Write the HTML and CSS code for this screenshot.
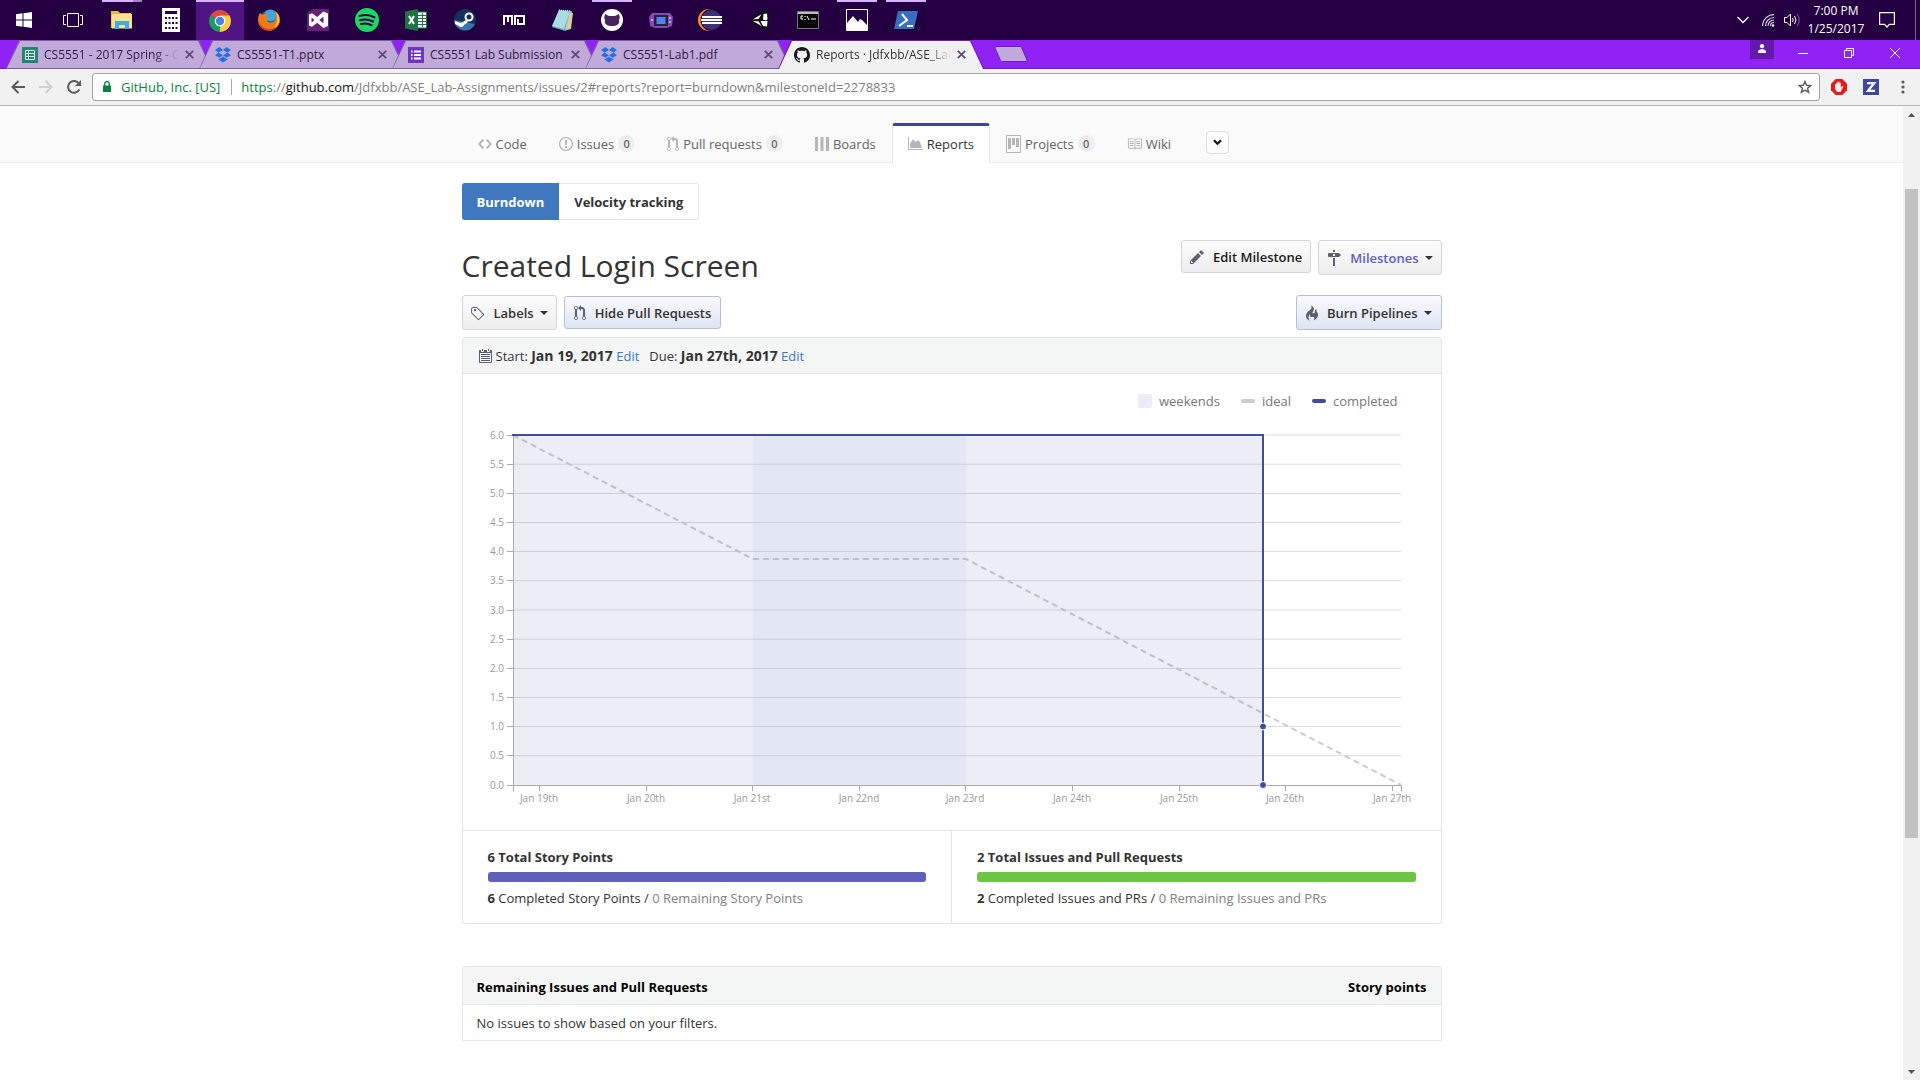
FILE: index.html
```html
<!DOCTYPE html>
<html lang="en">
<head>
<meta charset="utf-8">
<title>Reports · Jdfxbb/ASE_Lab-Assignments</title>
<link rel="stylesheet" href="styles.css">
</head>
<body>
<header class="taskbar">
  <div class="apps">
    <button class="app" aria-label="Start"><svg width="16" height="16" viewBox="0 0 16 16" fill="#fff"><path d="M0 2.300 6.500 1.300V7.500H0zM7.500 1.200 16 0V7.500H7.500zM0 8.500H6.500V14.700L0 13.700zM7.500 8.500H16V16L7.500 14.800z"/></svg></button>
    <button class="app" aria-label="Task view"><svg width="20" height="14" viewBox="0 0 20 14" fill="none" stroke="#fff"><path d="M4.500 .5h11v13h-11zM3 2.500H.5v9H3M17 2.500h2.500v9H17"/></svg></button>
    <button class="app open stacked" aria-label="File Explorer"><svg width="22" height="18" viewBox="0 0 22 18"><path d="M0 0h7l2 2h11v4H0z" fill="#e9b74c"/><path d="M1 3h20v14.500H1z" fill="#fde08f"/><path d="M0 5h1v12H0z" fill="#efc560"/><path d="M4 18v-8h14v8h-4v-4H8v4z" fill="#35b0e8"/></svg></button>
    <button class="app" aria-label="Calculator"><svg width="18" height="24" viewBox="0 0 18 24"><path d="M0 0h18v24H0z" fill="#fff"/><path d="M3 3h12v3H3zM3 9h2v2H3zm3.500 0h2v2h-2zm3.500 0h2v2h-2zm3.500 0h2v2h-2zM3 14h2v2H3zm3.500 0h2v2h-2zm3.500 0h2v2h-2zm3.500 0h2v2h-2zM3 19h2v2H3zm3.500 0h2v2h-2zm3.500 0h2v2h-2zm3.500 0h2v2h-2z" fill="#240046"/></svg></button>
    <button class="app active" aria-label="Chrome"><svg width="22" height="22" viewBox="0 0 22 22"><path d="M11 11 1.500 5.500A11 11 0 0 1 20.500 5.500z" fill="#dd4b3e"/><path d="M11 11 20.500 5.500A11 11 0 0 1 11 22z" fill="#fdce43"/><path d="M11 11 11 22A11 11 0 0 1 1.500 5.500z" fill="#1ba05c"/><path d="M11 5.500h9.500L15.500 14 11 22z" fill="#fdce43"/><circle cx="11" cy="11" r="5.300" fill="#fff"/><circle cx="11" cy="11" r="4.200" fill="#4486ee"/></svg></button>
    <button class="app" aria-label="Firefox"><svg width="22" height="22" viewBox="0 0 22 22"><circle cx="12" cy="10.500" r="10" fill="#1d62a8"/><circle cx="12.500" cy="6.500" r="6" fill="#3fa5dc"/><path d="M2 4 5 6C7 4 9 5 10 6L8 9C11 9 11 11 9 12 11 15 16 14 17 11 19 8 18 4 16 2 21 4 23 10 21.500 14 19 21 11 24 5 20-1 16-1 9 2 4z" fill="#ee7a1c"/><path d="M18 3c5 5 4 13-2 16 4-5 4-10 2-16z" fill="#ffcf45"/><path d="M1 12c2 8 11 10 17 6-3 5-12 5-16-1z" fill="#d8401f"/></svg></button>
    <button class="app" aria-label="Visual Studio"><svg width="22" height="22" viewBox="0 0 22 22"><path d="M0 4l6-4h16v22H0z" fill="#68217a"/><path d="M2 5.500v11l3 1.200 5.200-4L16.500 19l4.500-2V4.500L16.500 2.500 10.200 8 5 4.300z" fill="#fff"/><path d="m4.500 8.500 3 2.500-3 2.500zM16.500 7.500v7L12.300 11z" fill="#68217a"/></svg></button>
    <button class="app" aria-label="Spotify"><svg width="24" height="24" viewBox="0 0 24 24"><circle cx="12" cy="12" r="12" fill="#1ed760"/><path d="M4.500 8c5-1.500 11-1 15 1.400M5 12.200c4.500-1.300 9-.8 13 1.300M6 16c3.500-1 7.500-.6 10.500 1.100" fill="none" stroke="#240046" stroke-width="2" stroke-linecap="round"/></svg></button>
    <button class="app" aria-label="Excel"><svg width="22" height="22" viewBox="0 0 22 22"><path d="M12 3h9.500v16H12z" fill="#fff" stroke="#1f7244"/><path d="M13 6.500h8M13 9.500h8M13 12.500h8M13 15.500h8M17.500 4v14" stroke="#1f7244"/><path d="M0 2.500 13 0v22L0 19.500z" fill="#1f7244"/><path d="m4 7 5 8M9 7l-5 8" stroke="#fff" stroke-width="2"/></svg></button>
    <button class="app" aria-label="Steam"><svg width="22" height="22" viewBox="0 0 22 22"><circle cx="11" cy="11" r="11" fill="#15325c"/><path d="M0 11a11 11 0 0 0 21 4z" fill="#3975a8"/><circle cx="15" cy="8" r="3.500" fill="none" stroke="#fff" stroke-width="2"/><path d="m1 12 6 2 5-3 2 2-4 3a3 3 0 0 1-5 1l-4-2z" fill="#fff"/></svg></button>
    <button class="app" aria-label="Mo"><svg width="22" height="12" viewBox="0 0 22 12" fill="none" stroke="#fff" stroke-width="2"><path d="M1 11V2h8v9M5 2v6M12 11V2M11 2h10v8h-6V5"/></svg></button>
    <button class="app" aria-label="Notepad"><svg width="24" height="22" viewBox="0 0 24 22"><path d="m8 1 13 1-2 18-5 2-13-4z" fill="#65aaba"/><path d="m8 1 11 2-6 17-12-3z" fill="#a9dce3"/><path d="m19 3 3 1-2 16-6 1z" fill="#d8cda7"/><path d="m8 1 12 1" stroke="#fff" stroke-dasharray="1 1"/></svg></button>
    <button class="app open" aria-label="GitHub Desktop"><svg width="22" height="22" viewBox="0 0 22 22"><circle cx="11" cy="11" r="11" fill="#fff"/><path d="M4 5l4 2h6l4-2c1 3 1 4 0 6 1 4-2 6-7 6s-8-2-7-6c-1-2-1-3 0-6z" fill="#4a2461"/></svg></button>
    <button class="app" aria-label="Game emulator"><svg width="24" height="16" viewBox="0 0 24 16"><path d="M3 1h18l3 4-1 9-5 2H6l-5-2L0 5z" fill="#8848b5"/><path d="M5 3h14v11H5z" fill="#25213c"/><path d="M7.500 5h9v7h-9z" fill="#5182ed"/><path d="M2 8h2M20 6h2M20 10h2" stroke="#fff"/></svg></button>
    <button class="app" aria-label="Eclipse"><svg width="24" height="22" viewBox="0 0 24 22"><circle cx="11" cy="11" r="11" fill="#f7941e"/><circle cx="13.500" cy="11" r="11" fill="#240042"/><circle cx="13.500" cy="11" r="10" fill="#3a3277"/><path d="M4 8h20M3 11h21M4 14h20" stroke="#fff" stroke-width="1.800"/></svg></button>
    <button class="app" aria-label="Unity"><svg width="20" height="20" viewBox="0 0 20 20"><path d="M0 10 14 1l5 1 1 8-1 8-5 1z" fill="#111"/><path d="m4 9.200 8.500-5L9.500 9zM4 11l5.500.2 3 4.800zM14.500 4l3.500-.5.5 6-1.500 1-3-1zM18.500 11l-.5 5.500-4-.5-2.500-5z" fill="#fff"/></svg></button>
    <button class="app" aria-label="Command Prompt"><svg width="22" height="18" viewBox="0 0 22 18"><path d="M.5.5h21v17H.5z" fill="#080808" stroke="#777"/><path d="M1 2h20" stroke="#bbb" stroke-width="2"/><path d="M6 5H4v3h2M8 5v1M8 8v1M10 5l2 4M14 8h5" fill="none" stroke="#fff"/></svg></button>
    <button class="app open" aria-label="Photos"><svg width="22" height="22" viewBox="0 0 22 22"><path d="M.5.5h21v21H.5z" fill="#240046" stroke="#fff"/><path d="m1 14 6-7 5 6 2-3 2 1 5 5v5H1z" fill="#fff"/></svg></button>
    <button class="app open" aria-label="PowerShell"><svg width="24" height="18" viewBox="0 0 24 18"><path d="M4 0h20l-4 18H0z" fill="#386fc5"/><path d="m8 3 5 6-8 6M13 15h6" fill="none" stroke="#fff" stroke-width="2"/></svg></button>
  </div>
  <div class="tray">
    <svg width="12" height="8" viewBox="0 0 12 8" fill="none" stroke="#fff" stroke-width="1.300"><path d="m.5 1 5.500 5.500L11.500 1"/></svg>
    <svg width="13" height="13" viewBox="0 0 13 13" fill="none" stroke="#d4cbdc" stroke-width="1.200"><path d="M.6 12A11.400 11.400 0 0 1 12 .6M3.500 12A8.500 8.500 0 0 1 12 3.500M6 12a6 6 0 0 1 6-6M8.500 12A3.500 3.500 0 0 1 12 8.500"/><circle cx="11" cy="11.500" r="1.200" fill="#fff" stroke="none"/></svg>
    <svg width="17" height="14" viewBox="0 0 17 14" fill="none" stroke="#fff"><path d="M.5 4.500h2.500L6.500 1v12L3 9.500H.5zM8.500 5q1.500 2 0 4M10.500 3q3 4 0 8"/><path d="M13 1q4.500 6 0 12" opacity=".4"/></svg>
    <time class="clock"><span>7:00 PM</span><span>1/25/2017</span></time>
    <svg width="16" height="16" viewBox="0 0 16 16" fill="none" stroke="#fff" stroke-width="1.200"><path d="M.6.6h14.800v11.800h-5L8 15l-2.400-2.600h-5z"/></svg>
    <span class="desk-edge"></span>
  </div>
</header>

<div class="titlebar">
  <div class="tabs">
    <div class="tab"><svg class="fav" viewBox="0 0 16 16"><path d="M0 0h16v16H0z" fill="#23866f"/><path d="M3.500 3.500h9v9h-9zM3.500 6.500h9M3.500 9.500h9M6.500 3.500v9" fill="none" stroke="#e2e4ee"/></svg><span class="tab-text faded">CS5551 - 2017 Spring - G</span><button class="tab-close" aria-label="Close tab"><svg width="9" height="9" viewBox="0 0 9 9"><path d="m.8.8 7.400 7.400M8.200.8.800 8.200"/></svg></button></div>
    <div class="tab"><svg class="fav" viewBox="0 0 16 16" fill="#2170e8"><path d="m4.500 0 3.500 3-4.500 2.500L0 3zM11.500 0 8 3l4.500 2.500L16 3zM0 8.200l3.500-2.700L8 8.200l-3.500 2.600zM16 8.200l-3.500-2.700L8 8.200l3.500 2.600zM3.500 11.600l1 .5L8 9.500l3.500 2.600 1-.5v1L8 15.500l-4.500-2.900z"/></svg><span class="tab-text">CS5551-T1.pptx</span><button class="tab-close" aria-label="Close tab"><svg width="9" height="9" viewBox="0 0 9 9"><path d="m.8.8 7.400 7.400M8.200.8.800 8.200"/></svg></button></div>
    <div class="tab"><svg class="fav" viewBox="0 0 16 16"><path d="M0 0h16v16H0z" fill="#6e35bd"/><path d="M3 4.500h1.500M6 4.500h7M3 8h1.500M6 8h7M3 11.500h1.500M6 11.500h7" stroke="#fff" stroke-width="1.800"/></svg><span class="tab-text">CS5551 Lab Submission</span><button class="tab-close" aria-label="Close tab"><svg width="9" height="9" viewBox="0 0 9 9"><path d="m.8.8 7.400 7.400M8.200.8.800 8.200"/></svg></button></div>
    <div class="tab"><svg class="fav" viewBox="0 0 16 16" fill="#2170e8"><path d="m4.500 0 3.500 3-4.500 2.500L0 3zM11.500 0 8 3l4.500 2.500L16 3zM0 8.200l3.500-2.700L8 8.200l-3.500 2.600zM16 8.200l-3.500-2.700L8 8.200l3.500 2.600zM3.500 11.600l1 .5L8 9.500l3.500 2.600 1-.5v1L8 15.500l-4.500-2.900z"/></svg><span class="tab-text">CS5551-Lab1.pdf</span><button class="tab-close" aria-label="Close tab"><svg width="9" height="9" viewBox="0 0 9 9"><path d="m.8.8 7.400 7.400M8.200.8.800 8.200"/></svg></button></div>
    <div class="tab current"><svg class="fav" viewBox="0 0 16 16" fill="#1b1817"><path d="M8 0C3.580 0 0 3.580 0 8c0 3.540 2.290 6.530 5.470 7.590.4.070.55-.17.55-.38 0-.19-.01-.82-.01-1.490-2.010.37-2.530-.49-2.690-.94-.09-.23-.48-.94-.82-1.130-.28-.15-.68-.52-.01-.53.63-.01 1.080.58 1.230.82.72 1.210 1.870.87 2.330.66.07-.52.28-.87.51-1.070-1.780-.2-3.640-.89-3.640-3.950 0-.87.31-1.590.82-2.150-.08-.2-.36-1.020.08-2.120 0 0 .67-.21 2.200.82.640-.18 1.320-.27 2-.27s1.360.09 2 .27c1.530-1.040 2.200-.82 2.200-.82.440 1.100.16 1.920.08 2.120.51.56.82 1.270.82 2.150 0 3.070-1.870 3.750-3.650 3.950.29.25.54.73.54 1.480 0 1.070-.01 1.930-.01 2.200 0 .21.150.46.550.38A8.010 8.010 0 0 0 16 8c0-4.420-3.580-8-8-8z"/></svg><span class="tab-text faded">Reports · Jdfxbb/ASE_Lab</span><button class="tab-close" aria-label="Close tab"><svg width="9" height="9" viewBox="0 0 9 9"><path d="m.8.8 7.400 7.400M8.200.8.800 8.200"/></svg></button></div>
    <button class="new-tab" aria-label="New tab"><svg width="34" height="16" viewBox="0 0 34 16"><path d="M2 .5h24q1 0 1.500 1L33 14q.3 1.500-1 1.500H8.500q-1.500 0-2-1L1 2Q.8.500 2 .5z" fill="#c1a9d9" stroke="#6f1bc0"/></svg></button>
  </div>
  <div class="window-controls">
    <button class="user" aria-label="Profile"><svg width="8" height="9" viewBox="0 0 8 9" fill="#fff"><circle cx="4" cy="2.200" r="2.100"/><path d="M0 9V7q4-4 8 0v2z"/></svg></button>
    <button aria-label="Minimize"><svg width="10" height="10" viewBox="0 0 10 10"><path d="M0 5.500h10"/></svg></button>
    <button aria-label="Restore"><svg width="10" height="10" viewBox="0 0 10 10"><path d="M.5 2.500h7v7h-7zM2.500 2.500v-2h7v7h-2"/></svg></button>
    <button aria-label="Close"><svg width="10" height="10" viewBox="0 0 10 10"><path d="m0 0 10 10M10 0 0 10"/></svg></button>
  </div>
</div>

<div class="toolbar">
  <button aria-label="Back"><svg width="14" height="14" viewBox="0 0 14 14" fill="none" stroke="#5a5a5a" stroke-width="2"><path d="M14 7H1.500M7.500 1l-6 6 6 6"/></svg></button>
  <button aria-label="Forward"><svg width="14" height="14" viewBox="0 0 14 14" fill="none" stroke="#d0d0d0" stroke-width="2"><path d="M0 7h12.500M6.500 1l6 6-6 6"/></svg></button>
  <button aria-label="Reload"><svg width="14" height="14" viewBox="0 0 14 14" fill="none" stroke="#5a5a5a" stroke-width="2"><path d="M12.300 9.500A5.900 5.900 0 1 1 11.500 3"/><path d="M14 0v6H8z" fill="#5a5a5a" stroke="none"/></svg></button>
  <div class="omnibox">
    <svg width="8" height="11" viewBox="0 0 8 11"><path d="M0 4.500h8V11H0z" fill="#0b8043"/><path d="M1.700 5V3a2.300 2.300 0 0 1 4.600 0v2" fill="none" stroke="#0b8043" stroke-width="1.300"/></svg>
    <span class="cert">GitHub, Inc. [US]</span>
    <div class="url" role="textbox" aria-label="Address" contenteditable="true" spellcheck="false"><span class="secure">https</span>://<span class="host">github.com</span>/Jdfxbb/ASE_Lab-Assignments/issues/2#reports?report=burndown&amp;milestoneId=2278833</div>
    <button class="star" aria-label="Bookmark"><svg width="14" height="14" viewBox="0 0 14 14" fill="none" stroke="#5a5a5a" stroke-width="1.400"><path d="m7 1.500 1.600 3.800 4.100.3-3.100 2.700 1 4L7 10.100l-3.600 2.200 1-4-3.100-2.700 4.100-.3z"/></svg></button>
  </div>
  <button class="ext" aria-label="AdBlock"><svg width="16" height="16" viewBox="0 0 16 16"><path d="M4.700 0h6.600L16 4.700v6.600L11.300 16H4.700L0 11.300V4.700z" fill="#e31b1e"/><path d="M4 10V5.500q.8-1 1.300 0V4q.8-1.200 1.500 0V3q.8-1 1.500 0v1q.8-1 1.500 0v4.500L11.300 7q1.300-.3 1 .6L9.500 13H6z" fill="#f3f0ee"/></svg></button>
  <button class="ext" aria-label="ZenHub"><svg width="16" height="16" viewBox="0 0 16 16"><path d="M0 0h16v16H0z" fill="#40469a"/><path d="M4 4.200h7.200L5 11.800h7" fill="none" stroke="#fff" stroke-width="2.300"/></svg></button>
  <button class="ext" aria-label="Menu"><svg width="4" height="14" viewBox="0 0 4 14" fill="#5a5a5a"><circle cx="2" cy="2" r="1.600"/><circle cx="2" cy="7" r="1.600"/><circle cx="2" cy="12" r="1.600"/></svg></button>
</div>

<div class="viewport">
  <main class="page">
    <div class="repo-head">
      <nav class="repo-nav wrap">
        <a href="#code"><svg width="14" height="16" viewBox="0 0 14 16"><path fill-rule="evenodd" d="M9.500 3 8 4.500 11.500 8 8 11.500 9.500 13 14 8 9.500 3zm-5 0L0 8l4.500 5L6 11.500 2.500 8 6 4.500 4.500 3z"/></svg>Code</a>
        <a href="#issues"><svg width="14" height="16" viewBox="0 0 14 16"><path fill-rule="evenodd" d="M7 2.300c3.140 0 5.700 2.560 5.700 5.700s-2.560 5.700-5.700 5.700A5.710 5.710 0 0 1 1.300 8c0-3.140 2.560-5.700 5.700-5.700zM7 1C3.140 1 0 4.140 0 8s3.140 7 7 7 7-3.140 7-7-3.140-7-7-7zm1 3H6v5h2V4zm0 6H6v2h2v-2z"/></svg>Issues <span class="count">0</span></a>
        <a href="#pulls"><svg width="12" height="16" viewBox="0 0 12 16"><path fill-rule="evenodd" d="M11 11.280V5c-.03-.78-.34-1.470-.94-2.060C9.460 2.350 8.780 2.030 8 2H7V0L4 3l3 3V4h1c.27.020.48.110.69.310.21.200.3.420.31.690v6.280A1.993 1.993 0 0 0 10 15a1.993 1.993 0 0 0 1-3.720zm-1 2.920c-.66 0-1.200-.55-1.200-1.200 0-.65.55-1.200 1.200-1.200.65 0 1.200.55 1.200 1.200 0 .65-.55 1.200-1.200 1.200zM4 3c0-1.110-.89-2-2-2a1.993 1.993 0 0 0-1 3.720v6.560A1.993 1.993 0 0 0 2 15a1.993 1.993 0 0 0 1-3.720V4.720c.59-.34 1-.98 1-1.720zm-.8 10c0 .66-.55 1.200-1.200 1.200-.65 0-1.200-.55-1.200-1.200 0-.65.55-1.200 1.200-1.200.65 0 1.200.55 1.200 1.200zM2 4.200C1.340 4.200.8 3.650.8 3c0-.65.55-1.200 1.200-1.200.65 0 1.200.55 1.200 1.200 0 .65-.55 1.200-1.200 1.200z"/></svg>Pull requests <span class="count">0</span></a>
        <a href="#boards"><svg width="14" height="16" viewBox="0 0 14 16"><path d="M0 1h3v14H0zM5.500 1h3v14h-3zM11 1h3v14h-3z"/></svg>Boards</a>
        <a href="#reports" class="selected" aria-current="page"><svg width="15" height="16" viewBox="0 0 15 16"><path d="M0 1h1v12h14v1H0zM2 12V8l3-5 2.500 3L10 4l2 2 2 6z"/></svg>Reports</a>
        <a href="#projects"><svg width="15" height="18" viewBox="0 0 15 18"><path fill-rule="evenodd" d="M10 12h3V3h-3v9zm-4-2h3V3H6v7zm-4 4h3V3H2v11zm-1 3h13V1H1v16zM14 0H1a1 1 0 0 0-1 1v16a1 1 0 0 0 1 1h13a1 1 0 0 0 1-1V1a1 1 0 0 0-1-1z"/></svg>Projects <span class="count">0</span></a>
        <a href="#wiki"><svg width="15" height="16" viewBox="0 0 16 16"><path fill-rule="evenodd" d="M3 5h4v1H3V5zm0 3h4V7H3v1zm0 2h4V9H3v1zm11-5h-4v1h4V5zm0 2h-4v1h4V7zm0 2h-4v1h4V9zm2-6v9c0 .55-.45 1-1 1H9.500l-1 1-1-1H2c-.55 0-1-.45-1-1V3c0-.55.45-1 1-1h5.500l1 1 1-1H15c.55 0 1 .45 1 1zm-8 .5L7.500 3H2v9h6V3.500zm7-.5H9.500l-.5.5V12h6V3z"/></svg>Wiki</a>
        <button class="more" aria-label="More"><svg width="9" height="7" viewBox="0 0 9 7" fill="none" stroke="#111" stroke-width="2.200"><path d="m1 1.300 3.500 3.500L8 1.300"/></svg></button>
      </nav>
    </div>

    <div class="wrap">
      <div class="segments"><button class="segment on">Burndown</button><button class="segment">Velocity tracking</button></div>
      <div class="row title-row">
        <h1>Created Login Screen</h1>
        <div class="actions">
          <button class="btn dark"><svg width="14" height="16" viewBox="0 0 14 16"><path d="M0 12v3h3l8-8-3-3-8 8zm3 2H1v-2h1v1h1v1zm10.300-9.300L12 6 9 3l1.300-1.300a1 1 0 0 1 1.410 0l1.590 1.590a1 1 0 0 1 0 1.410z"/></svg>Edit Milestone</button>
          <button class="btn tall violet"><svg width="14" height="16" viewBox="0 0 14 16"><path fill-rule="evenodd" d="M8 2H6V0h2v2zm4 5H2a1 1 0 0 1-1-1V4a1 1 0 0 1 1-1h10l2 2-2 2zM8 4H6v2h2V4zM6 16h2V8H6v8z"/></svg>Milestones<span class="caret"></span></button>
        </div>
      </div>
      <div class="row filter-row">
        <div class="actions">
          <button class="btn tall"><svg width="14" height="16" viewBox="0 0 14 16"><path fill-rule="evenodd" d="M6.730 2.730C6.260 2.260 5.620 2 4.960 2H2.500A2.500 2.500 0 0 0 0 4.500v2.460c0 .66.27 1.300.73 1.770l6.060 6.060a1 1 0 0 0 1.410 0l4.590-4.590a1 1 0 0 0 0-1.410zM1.380 8.090A1.590 1.590 0 0 1 .91 6.960V4.500c0-.88.72-1.590 1.590-1.590h2.470c.42 0 .83.16 1.130.470l6.140 6.130-4.730 4.730zM3 4h2v2H3z"/></svg>Labels<span class="caret"></span></button>
          <button class="btn pressed"><svg width="12" height="16" viewBox="0 0 12 16"><path fill-rule="evenodd" d="M11 11.280V5c-.03-.78-.34-1.470-.94-2.060C9.460 2.350 8.780 2.030 8 2H7V0L4 3l3 3V4h1c.27.020.48.110.69.310.21.200.3.420.31.690v6.280A1.993 1.993 0 0 0 10 15a1.993 1.993 0 0 0 1-3.720zm-1 2.920c-.66 0-1.200-.55-1.200-1.200 0-.65.55-1.200 1.200-1.200.65 0 1.200.55 1.200 1.200 0 .65-.55 1.200-1.200 1.200zM4 3c0-1.110-.89-2-2-2a1.993 1.993 0 0 0-1 3.720v6.560A1.993 1.993 0 0 0 2 15a1.993 1.993 0 0 0 1-3.720V4.720c.59-.34 1-.98 1-1.720zm-.8 10c0 .66-.55 1.200-1.200 1.200-.65 0-1.200-.55-1.200-1.200 0-.65.55-1.200 1.200-1.200.65 0 1.200.55 1.200 1.200zM2 4.200C1.340 4.200.8 3.650.8 3c0-.65.55-1.200 1.200-1.200.65 0 1.200.55 1.200 1.200 0 .65-.55 1.200-1.200 1.200z"/></svg>Hide Pull Requests</button>
        </div>
        <button class="btn tall pressed"><svg width="12" height="16" viewBox="0 0 12 16"><path d="M5.050.310c.81 2.170.41 3.380-.52 4.310C3.550 5.670 1.980 6.450.9 7.980c-1.450 2.050-1.700 6.530 3.530 7.700-2.200-1.160-2.670-4.520-.3-6.610-.61 2.030.53 3.330 1.940 2.860 1.390-.47 2.300.53 2.270 1.670-.02.78-.31 1.440-1.130 1.810 3.420-.59 4.780-3.420 4.780-5.560 0-2.840-2.530-3.220-1.250-5.610-1.520.13-2.030 1.130-1.890 2.750.09 1.080-1.020 1.800-1.860 1.330-.67-.41-.66-1.190-.06-1.780C8.180 5.310 8.680 2.450 5.050.32z"/></svg>Burn Pipelines<span class="caret"></span></button>
      </div>

      <section class="panel">
        <div class="panel-head dates">
          <svg width="14" height="16" viewBox="0 0 14 16"><path fill-rule="evenodd" d="M13 2h-1v1.500c0 .28-.22.5-.5.5h-2c-.28 0-.5-.22-.5-.5V2H6v1.500c0 .28-.22.5-.5.5h-2c-.28 0-.5-.22-.5-.5V2H2c-.55 0-1 .45-1 1v11c0 .55.45 1 1 1h11c.55 0 1-.45 1-1V3c0-.55-.45-1-1-1zm0 12H2V5h11v9zM5 3H4V1h1v2zm6 0h-1V1h1v2zM3 6h9v1H3zM3 8h9v1H3zM3 10h9v1H3zM3 12h9v1H3z"/></svg>
          <span>Start: <strong>Jan 19, 2017</strong> <a href="#start">Edit</a></span>
          <span class="due">Due: <strong>Jan 27th, 2017</strong> <a href="#due">Edit</a></span>
        </div>
        <ul class="legend">
          <li><i class="swatch"></i>weekends</li>
          <li><i class="dash"></i>ideal</li>
          <li><i class="dash done"></i>completed</li>
        </ul>
        <svg class="chart" viewBox="-50 -15 978 410" role="img" aria-label="Burndown chart">
          <path class="weekend" d="M240 0h213v350H240z"/>
          <path class="grid" d="M0 0H888M0 29.200H888M0 58.500H888M0 87.500H888M0 116.500H888M0 145.700H888M0 175H888M0 204.200H888M0 233.500H888M0 262.500H888M0 291.500H888M0 320.700H888"/>
          <path class="ideal" d="M0 0 240 124H453L888 350"/>
          <path class="burned" d="M0 0h750v350H0z"/>
          <path class="axis" d="M-6 .5h6.500V350.500H-6M-6 29.500H0M-6 58.500H0M-6 87.500H0M-6 116.500H0M-6 145.500H0M-6 175.500H0M-6 204.500H0M-6 233.500H0M-6 262.500H0M-6 291.500H0M-6 320.500H0M.5 356.500v-6H888.500v6M26.500 350v6M133.500 350v6M239.500 350v6M346.500 350v6M452.500 350v6M559.500 350v6M666.500 350v6M772.500 350v6M879.500 350v6"/>
          <path class="completed" d="M-1 0H750V350"/>
          <g class="points"><circle cx="750" cy="291.500" r="3.500"/><circle cx="750" cy="350" r="3.500"/></g>
          <g class="y-labels"><text x="-9" y="4">6.0</text><text x="-9" y="33">5.5</text><text x="-9" y="62">5.0</text><text x="-9" y="91">4.5</text><text x="-9" y="120">4.0</text><text x="-9" y="149">3.5</text><text x="-9" y="179">3.0</text><text x="-9" y="208">2.5</text><text x="-9" y="237">2.0</text><text x="-9" y="266">1.5</text><text x="-9" y="295">1.0</text><text x="-9" y="324">0.5</text><text x="-9" y="354">0.0</text></g>
          <g class="x-labels"><text x="26" y="367">Jan 19th</text><text x="133" y="367">Jan 20th</text><text x="239" y="367">Jan 21st</text><text x="346" y="367">Jan 22nd</text><text x="452" y="367">Jan 23rd</text><text x="559" y="367">Jan 24th</text><text x="666" y="367">Jan 25th</text><text x="772" y="367">Jan 26th</text><text x="879" y="367">Jan 27th</text></g>
        </svg>
        <div class="stats">
          <div class="stat"><h2>6 Total Story Points</h2><div class="bar"></div><p><strong>6</strong> Completed Story Points / <span>0 Remaining Story Points</span></p></div>
          <div class="stat"><h2>2 Total Issues and Pull Requests</h2><div class="bar green"></div><p><strong>2</strong> Completed Issues and PRs / <span>0 Remaining Issues and PRs</span></p></div>
        </div>
      </section>

      <table class="remaining">
        <thead><tr><th>Remaining Issues and Pull Requests</th><th class="points-col">Story points</th></tr></thead>
        <tbody><tr><td colspan="2">No issues to show based on your filters.</td></tr></tbody>
      </table>
    </div>
  </main>
  <div class="scrollbar" aria-hidden="true">
    <svg width="17" height="17" viewBox="0 0 17 17"><path d="m5 11 3.500-4 3.500 4z"/></svg>
    <div class="track"><div class="thumb"></div></div>
    <svg width="17" height="17" viewBox="0 0 17 17"><path d="m5 6 3.500 4L12 6z"/></svg>
  </div>
</div>
</body>
</html>
```
FILE: styles.css
```css
* { box-sizing: border-box; }
body { margin: 0; min-height: 100vh; display: flex; flex-direction: column; font: 13px/20px "Open Sans", sans-serif; color: #333; background: #fff; }
button { border: 0; padding: 0; margin: 0; background: none; font: inherit; color: inherit; display: flex; align-items: center; justify-content: center; }
svg { flex: none; display: block; }
h1, h2, p, ul { margin: 0; padding: 0; }
a { color: #4078c0; text-decoration: none; }

/* Taskbar */
.taskbar { height: 40px; background: #240042; display: flex; justify-content: space-between; color: #fff; }
.apps { display: flex; gap: 1px; }
.app { width: 48px; height: 40px; position: relative; }
.app.active { background: #511484; border-top: 2px solid #d9b3ff; }
.app.open::before { content: ""; position: absolute; top: 0; left: 4px; right: 4px; height: 2px; background: #d9b3ff; }
.app.stacked::before { border-right: 9px solid #a385bf; }
.tray { display: flex; align-items: center; gap: 12px; }
.tray > svg + svg { margin-left: 1px; }
.tray > svg:nth-child(3) { margin-left: -3px; }
.clock { display: flex; flex-direction: column; align-items: center; font-size: 12px; line-height: 18px; width: 52px; margin: 0 5px 0 -3px; }
.desk-edge { align-self: stretch; width: 5px; border-left: 1px solid #76618a; margin-left: 8px; }

/* Tab strip */
.titlebar { height: 29px; background: #9122f5; border-bottom: 1px solid #6f1bc0; display: flex; justify-content: space-between; }
.tabs { display: flex; padding: 0 0 0 6px; }
.tab { width: 206px; height: 29px; margin-right: -13px; padding: 0 18px 0 16px; display: flex; align-items: center; gap: 6px; position: relative; z-index: 0; color: #2c1b44; }
.tab::before, .tab::after { content: ""; position: absolute; inset: 0; z-index: -2; background: #7d5aa6; clip-path: polygon(0 100%, 13px 0, calc(100% - 13px) 0, 100% 100%); }
.tab::after { inset: 1px 1px 1px 1px; z-index: -1; background: #c1a9d9; }
.tab.current { color: #333; z-index: 1; }
.tab.current::before { background: #6f1bc0; }
.tab.current::after { background: #f1f1f1; bottom: 0; }
.fav { width: 16px; height: 16px; }
.tab-text { flex: 1; font-size: 12px; line-height: 28px; white-space: nowrap; }
.tab-text.faded { min-width: 0; mask-image: linear-gradient(to right, #000 calc(100% - 24px), transparent); }
.tab-close { width: 9px; height: 28px; }
.tab-close svg { fill: none; stroke: #5b4a70; stroke-width: 1.700; }
.new-tab { width: 34px; height: 28px; margin-left: 23px; }
.window-controls { display: flex; align-items: flex-start; padding-right: 2px; }
.window-controls button { width: 46px; height: 26px; }
.window-controls svg { fill: none; stroke: #fff; }
.window-controls .user { width: 24px; height: 19px; background: #6519ac; margin-right: 6px; padding-bottom: 2px; }
.window-controls .user svg { fill: #fff; stroke: none; }

/* Toolbar */
.toolbar { height: 37px; background: #f1f1f1; border-bottom: 1px solid #b6b4b6; display: flex; align-items: center; padding: 0 15px 1px 11px; gap: 14px; }
.omnibox { flex: 1; height: 28px; border: 1px solid #a5a5a5; border-radius: 3px; background: #fff; display: flex; align-items: center; padding: 0 7px 0 10px; margin-left: -3px; margin-right: -3px; }
.cert { color: #0b8043; margin-left: 10px; padding-right: 11px; border-right: 1px solid #aaa; line-height: 16px; white-space: nowrap; }
.url { flex: 1; min-width: 0; padding-left: 9px; color: #808080; white-space: nowrap; overflow: hidden; outline: 0; }
.secure { color: #0b8043; }
.host { color: #111; }
.ext { width: 16px; height: 16px; margin-right: 2px; }
.ext:last-child { margin: 0 -6px 0 0; }

/* Page frame */
.viewport { flex: 1; display: flex; }
.page { flex: 1; min-width: 0; }
.wrap { width: 980px; max-width: 100%; margin: 0 auto; }
.scrollbar { width: 17px; background: #f1f1f1; display: flex; flex-direction: column; }
.scrollbar path { fill: #505050; }
.track { flex: 1; padding: 0 2px; }
.thumb { height: 69%; background: #c1c1c1; position: relative; top: 7%; }

/* Repository navigation */
.repo-head { background: #fafafa; border-bottom: 1px solid #eee; padding-top: 17px; }
.repo-nav { display: flex; align-items: flex-start; }
.repo-nav a { height: 39px; padding: 0 15px; border: 1px solid transparent; border-top: 3px solid transparent; display: flex; align-items: center; gap: 4px; color: #666; }
.repo-nav a svg { fill: #b5b5b5; }
.repo-nav a.selected { color: #333; background: #fff; border-color: #3e4490 #e5e5e5 #fff; border-radius: 3px 3px 0 0; margin-bottom: -1px; height: 40px; border-bottom: 0; padding-bottom: 1px; }
.count { min-width: 17px; height: 17px; border-radius: 9px; background: #eee; font-size: 11px; font-weight: 600; line-height: 17px; text-align: center; }
.more { width: 23px; height: 23px; border: 1px solid #ddd; border-radius: 4px; background: #fcfcfc; margin: 8px 0 0 19px; }

/* Controls */
.segments { display: flex; padding-top: 20px; }
.segment { height: 37px; padding: 0 15px; border: 1px solid #e5e5e5; border-left: 0; border-radius: 0 3px 3px 0; font-weight: 700; }
.segment.on { background: #4078c0; border-color: #4078c0; color: #fff; border-radius: 3px 0 0 3px; padding: 0 14px 0 15px; }
.row { display: flex; justify-content: space-between; align-items: flex-start; }
.title-row { margin-top: 20px; height: 55px; }
h1 { font-size: 30px; line-height: 52px; font-weight: 400; }
.actions { display: flex; gap: 7px; align-items: center; }
.title-row .actions { align-items: flex-start; }
.btn { height: 33px; padding: 0 8px; border: 1px solid #d5d5d5; border-radius: 3px; background: linear-gradient(#fcfcfc, #eee); font-weight: 600; white-space: nowrap; }
.btn svg { fill: #596170; margin-right: 9px; }
.btn.tall { height: 35px; }
.btn.pressed { background: linear-gradient(#f8faff, #dfe4f3); border-color: #b5bfd8; padding: 0 9px; }
.btn.dark { color: #1a1a1a; }
.btn.violet { color: #5e60ba; }
.caret { border: 4px solid transparent; border-top-color: #333; border-bottom: 0; margin-left: 6px; }

/* Burndown panel */
.panel { margin-top: 7px; border: 1px solid #e5e5e5; border-radius: 3px; }
.panel-head { height: 36px; background: #f4f6f6; border-bottom: 1px solid #e5e5e5; display: flex; align-items: center; }
.dates { padding: 0 15px; gap: 4px; }
.dates strong { font-size: 14px; }
.dates svg { fill: #596170; }
.due { margin-left: 6px; }
.legend { display: flex; justify-content: flex-end; gap: 21px; padding: 17px 43px 9px; list-style: none; color: #777; }
.legend li { display: flex; align-items: center; gap: 7px; }
.swatch { width: 14px; height: 14px; border-radius: 2px; background: #eaecf7; }
.dash { width: 14px; height: 4px; border-radius: 2px; background: #ccc; }
.dash.done { background: #404d9e; }
.chart { width: 100%; height: auto; }
.chart text { font-size: 10px; fill: #999; }
.y-labels { text-anchor: end; }
.x-labels { text-anchor: middle; }
.weekend { fill: #f5f8fe; }
.grid { stroke: #ddd; fill: none; }
.ideal { stroke: #ccc; stroke-width: 2; stroke-dasharray: 6 4; fill: none; }
.burned { fill: #404d9e; fill-opacity: .1; }
.axis { stroke: #aaa; fill: none; }
.completed { stroke: #404d9e; stroke-width: 2; fill: none; }
.points circle { fill: #404d9e; stroke: #fff; }
.stats { display: flex; border-top: 1px solid #e5e5e5; }
.stat { flex: 1; padding: 16px 25px 15px; }
.stat + .stat { border-left: 1px solid #e5e5e5; }
h2 { font-size: 13px; line-height: 20px; font-weight: 700; }
.bar { height: 10px; border-radius: 3px; background: #5f60b9; margin: 5px 0 6px; }
.bar.green { background: #6cc644; }
.stat p span { color: #808080; }

/* Remaining issues */
.remaining { width: 100%; margin: 42px 0 40px; border-spacing: 0; border: 1px solid #e5e5e5; border-radius: 3px 3px 0 0; }
.remaining th { height: 38px; padding: 2px 14px 0; background: #f4f6f6; border-bottom: 1px solid #e5e5e5; text-align: left; color: #000; font-weight: 700; }
.remaining .points-col { text-align: right; }
.remaining td { height: 35px; padding: 0 14px; }
```
